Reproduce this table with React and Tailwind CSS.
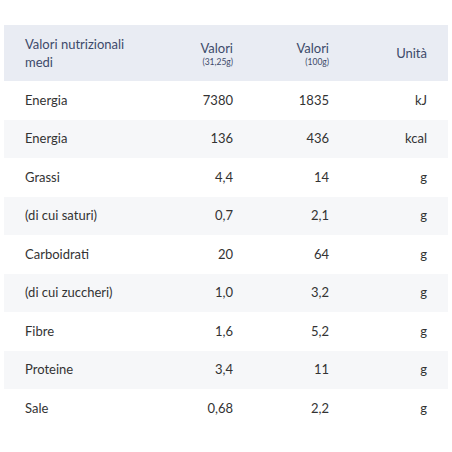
import React from 'react';

const rows = [
  ['Energia', '7380', '1835', 'kJ'],
  ['Energia', '136', '436', 'kcal'],
  ['Grassi', '4,4', '14', 'g'],
  ['(di cui saturi)', '0,7', '2,1', 'g'],
  ['Carboidrati', '20', '64', 'g'],
  ['(di cui zuccheri)', '1,0', '3,2', 'g'],
  ['Fibre', '1,6', '5,2', 'g'],
  ['Proteine', '3,4', '11', 'g'],
  ['Sale', '0,68', '2,2', 'g'],
];

const cols = 'grid grid-cols-[minmax(0,1fr)_80px_96px_98px] items-center px-[21px]';

export default function App() {
  return (
    <div className="w-[452px] h-[452px] bg-white pt-[25px] px-[4px]" style={{ fontFamily: 'Lato, "Noto Sans", sans-serif' }}>
      {/* intestazione */}
      <div className={`${cols} h-[56px] bg-[#e9ecf3] text-[#3d4a6a] text-[13px] leading-[18px]`}>
        <div>Valori nutrizionali<br />medi</div>
        <div className="text-right">
          <div>Valori</div>
          <div className="text-[8.5px] leading-[10px]">(31,25g)</div>
        </div>
        <div className="text-right">
          <div>Valori</div>
          <div className="text-[8.5px] leading-[10px]">(100g)</div>
        </div>
        <div className="text-right">Unità</div>
      </div>

      {/* righe */}
      {rows.map((r, i) => (
        <div
          key={i}
          className={`${cols} h-[38.5px] text-[13px] text-[#333333] ${i % 2 === 1 ? 'bg-[#f6f7f9]' : 'bg-white'}`}
        >
          <div>{r[0]}</div>
          <div className="text-right">{r[1]}</div>
          <div className="text-right">{r[2]}</div>
          <div className="text-right">{r[3]}</div>
        </div>
      ))}
    </div>
  );
}
